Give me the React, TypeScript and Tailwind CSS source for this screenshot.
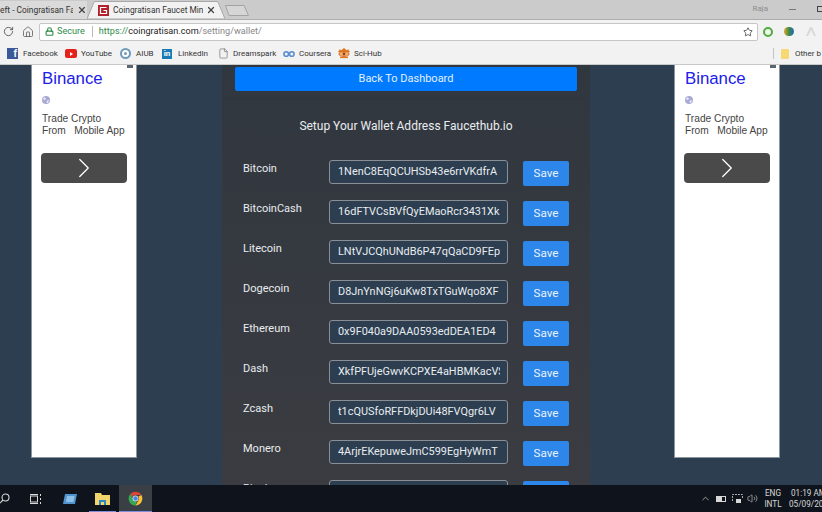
import { ChevronRight, ChevronUp, File, Home, RotateCw, Star, Volume2, X, Lock } from 'lucide-react';

const font = "font-['Roboto',sans-serif]";

type Wallet = { name: string; value: string };

const wallets: Wallet[] = [
  { name: 'Bitcoin', value: '1NenC8EqQCUHSb43e6rrVKdfrA' },
  { name: 'BitcoinCash', value: '16dFTVCsBVfQyEMaoRcr3431Xk' },
  { name: 'Litecoin', value: 'LNtVJCQhUNdB6P47qQaCD9FEp' },
  { name: 'Dogecoin', value: 'D8JnYnNGj6uKw8TxTGuWqo8XF' },
  { name: 'Ethereum', value: '0x9F040a9DAA0593edDEA1ED4' },
  { name: 'Dash', value: 'XkfPFUjeGwvKCPXE4aHBMKacVS' },
  { name: 'Zcash', value: 't1cQUSfoRFFDkjDUi48FVQgr6LV' },
  { name: 'Monero', value: '4ArjrEKepuweJmC599EgHyWmT' },
  { name: 'Ripple', value: 'rLHzPsX6oXkzU2qL12kHCH8G8c' },
];

const ChromeLogo = ({ size }: { size: number }) => (
  <svg width={size} height={size} viewBox="0 0 24 24">
    <path d="M12 1a11 11 0 0 1 9.500 5.500H12a5.500 5.500 0 0 0-5 3.200L3.600 4.900A11 11 0 0 1 12 1z" fill="#dc4437" />
    <path d="M21.500 6.500A11 11 0 0 1 12 23l4.800-8.200A5.500 5.500 0 0 0 16.500 8.800z" fill="#fbc02d" />
    <path d="M12 23A11 11 0 0 1 3.600 4.900L7.900 12a5 5 0 0 0 6.300 5z" fill="#34a853" />
    <circle cx="12" cy="12" r="4.200" fill="#4a7fe0" stroke="#fff" strokeWidth="1.200" />
  </svg>
);

const bookmarks = [
  {
    label: 'Facebook',
    width: 'w-[58px] gap-[5px]',
    icon: (
      <span className="flex h-[11px] w-[11px] items-end justify-end bg-[#3b5998] pr-[1px] text-[10px] font-bold leading-none text-white">f</span>
    ),
  },
  {
    label: 'YouTube',
    width: 'w-[55px] gap-[4px]',
    icon: (
      <span className="flex h-[9px] w-[12px] items-center justify-center rounded-[2px] bg-[#e5211b]">
        <span className="h-0 w-0 border-y-[2px] border-l-[3px] border-y-transparent border-l-white" />
      </span>
    ),
  },
  {
    label: 'AIUB',
    width: 'w-[42px] gap-[5px]',
    icon: (
      <span className="flex h-[11px] w-[11px] items-center justify-center rounded-full border-2 border-[#6d9abb] bg-white">
        <span className="h-[3px] w-[3px] rounded-full bg-[#6d9abb]" />
      </span>
    ),
  },
  {
    label: 'LinkedIn',
    width: 'w-[56px] gap-[6px]',
    icon: (
      <span className="flex h-[10px] w-[10px] items-center justify-center bg-[#1a7cb5] text-[8px] font-bold leading-none text-white">in</span>
    ),
  },
  { label: 'Dreamspark', width: 'w-[65px] gap-[4px]', icon: <File size={11} strokeWidth={1.2} className="text-[#555]" /> },
  {
    label: 'Coursera',
    width: 'w-[55px] gap-[4px]',
    icon: (
      <svg width="12" height="8" viewBox="0 0 12 8" fill="none" stroke="#5a8fd0" strokeWidth="1.600">
        <circle cx="3.200" cy="4" r="2.300" />
        <circle cx="8.800" cy="4" r="2.300" />
      </svg>
    ),
  },
  {
    label: 'Sci-Hub',
    width: 'w-[50px] gap-[4px]',
    icon: (
      <svg width="12" height="11" viewBox="0 0 12 11">
        <path d="M0 4L2 1l1 1.500L6 0l3 2.500L10 1l2 3-2 .5H2z" fill="#e2761b" />
        <ellipse cx="6" cy="6" rx="5" ry="2.400" fill="#f2b56a" stroke="#c9541a" strokeWidth="0.800" />
        <circle cx="6" cy="6" r="1.400" fill="#a83a12" />
        <path d="M2 9.500h8" stroke="#e2761b" strokeWidth="1.200" />
      </svg>
    ),
  },
];

const AdPanel = () => (
  <div className="h-[393px] w-[106px] shrink-0 self-start border border-t-0 border-[#8d959c] bg-white pl-[10px] font-['Liberation_Sans',sans-serif]">
    <div className="relative">
      <div className="absolute right-[3px] top-0 h-[3px] w-[6px] bg-[#5b6670]" />
    </div>
    <div className="text-[16.800px] leading-[27px] text-[#2020e8]">Binance</div>
    <svg className="mt-[4px]" width="8" height="8" viewBox="0 0 8 8">
      <circle cx="4" cy="4" r="4" fill="#a9a9d6" />
      <path d="M2 1l2 1.500-1 1.500L1 3.500zM5 4.500l2-.5-1 3-1.500-.5z" fill="#e8e8f4" />
    </svg>
    <div className="mt-[9px] text-[10.200px] leading-[12px] text-[#444]">
      <div>Trade Crypto</div>
      <div className="whitespace-pre">From   Mobile App</div>
    </div>
    <div className="ml-[-1px] mt-[16px] flex h-[30px] w-[86px] items-center justify-center rounded-[4px] bg-[#4a4a4a]">
      <ChevronRight size={34} strokeWidth={0.9} className="text-white" />
    </div>
  </div>
);

const WalletRow = ({ wallet }: { wallet: Wallet }) => (
  <div className="flex h-[40px] shrink-0 items-start">
    <div className="w-[86px] text-[11px] leading-[16px] text-[#e9ecef]">{wallet.name}</div>
    <div className="mt-[-1px] h-[24px] w-[179px] shrink-0 rounded-[3px] border border-[#8a8f96] bg-[#2c3e50] pl-[8px] text-[10.900px] leading-[22px] text-[#e9ecef]">
      <div className="w-[162px] overflow-hidden whitespace-nowrap">{wallet.value}</div>
    </div>
    <button className="ml-[15px] h-[25px] w-[46px] rounded-[2px] bg-[#2d86ea] text-[11.700px] text-[#e9f2ff]">Save</button>
  </div>
);

export default function App() {
  return (
    <div className={`flex h-[512px] w-[822px] flex-col overflow-hidden bg-[#2c3e50] ${font}`}>
      {/* tab strip */}
      <div className="flex h-[19px] shrink-0 items-end overflow-hidden bg-[#cbcbcb] text-[8.400px] text-[#333]">
        <div className="flex h-[18px] w-[87px] shrink-0 items-center whitespace-nowrap bg-[#dadada]">
          <span className="w-[74px] overflow-hidden">eft - Coingratisan Faucet</span>
          <X size={10} strokeWidth={3} className="ml-[4px] text-[#444]" />
        </div>
        <div className="relative flex h-[18px] w-[138px] shrink-0 items-center pl-[11px]">
          <svg className="absolute inset-0" width="138" height="18" viewBox="0 0 138 18">
            <path d="M0 18 L7 1 Q7.500 .5 9 .5 H129 Q130.500 .5 131 1 L138 18 Z" fill="#f2f2f2" stroke="#a8a8a8" />
          </svg>
          <svg className="relative shrink-0" width="11" height="11" viewBox="0 0 11 11">
            <rect width="11" height="11" fill="#b3222c" />
            <path d="M8.500 2.500H2.500V8.500H8.500V5.500H5.500" fill="none" stroke="#fff" strokeWidth="1.200" />
          </svg>
          <span className="relative ml-[4px] w-[90px] overflow-hidden whitespace-nowrap">Coingratisan Faucet Mining</span>
          <X size={10} strokeWidth={3} className="relative ml-[3px] text-[#444]" />
        </div>
        <svg className="mb-[3px] shrink-0" width="24" height="11" viewBox="0 0 24 11" fill="#d6d6d6" stroke="#a3a3a3">
          <path d="M.5 .5H19L23.500 10.500H4z" />
        </svg>
        <div className="flex-1" />
        <span className="mb-[4px] text-[8px] text-[#8d8d8d]">Raja</span>
        <div className="mb-[9px] ml-[21px] h-[1px] w-[7px] bg-[#777]" />
        <div className="mb-[7px] ml-[21px] mr-[-3px] h-[6px] w-[8px] border border-[#444]" />
      </div>

      {/* toolbar */}
      <div className="flex h-[24px] shrink-0 items-center border-t border-[#adadad] bg-[#f2f2f2]">
        <RotateCw size={11} strokeWidth={2} className="ml-[3px] text-[#5a5a5a]" />
        <Home size={12} strokeWidth={1.600} className="ml-[8px] text-[#5a5a5a]" />
        <div className="ml-[5px] flex h-[18px] w-[719px] items-center rounded-[2px] border border-[#c6c6c6] bg-white pl-[5px] text-[9.100px]">
          <Lock size={9} strokeWidth={3} className="text-[#2e8b47]" />
          <span className="ml-[3px] text-[#2e8b47]">Secure</span>
          <span className="ml-[7px] h-[11px] w-[1px] bg-[#bbb]" />
          <span className="ml-[6px] text-[#2e8b47]">https://</span>
          <span className="text-[#222]">coingratisan.com</span>
          <span className="text-[#888]">/setting/wallet/</span>
          <Star size={10} strokeWidth={2} className="ml-auto mr-[4px] text-[#444]" />
        </div>
        <div className="ml-[5px] h-[10px] w-[10px] rounded-full border-2 border-[#4fae3c]" />
        <div className="ml-[11px] h-[9px] w-[10px] rounded-full bg-gradient-to-r from-[#d9a22a] via-[#3a8a3e] to-[#2a63b8]" />
        <svg className="ml-[12px]" width="10" height="9" viewBox="0 0 10 9" fill="#d8d8d8">
          <path d="M0 9L4 0h2l4 9H8L5 3 2 9z" />
        </svg>
      </div>

      {/* bookmarks */}
      <div className="flex h-[22px] shrink-0 items-center border-b border-[#c9c9c9] bg-[#f2f2f2] pl-[7px] text-[8px] text-[#333]">
        {bookmarks.map((b) => (
          <div key={b.label} className={`flex shrink-0 items-center ${b.width}`}>
            {b.icon}
            <span>{b.label}</span>
          </div>
        ))}
        <div className="ml-auto h-[11px] w-[1px] bg-[#c4c4c4]" />
        <div className="ml-[7px] h-[10px] w-[8px] rounded-[1px] bg-[#f8d775]" />
        <span className="ml-[6px] w-[27px] shrink-0 whitespace-nowrap">Other b</span>
      </div>

      {/* page */}
      <div className="flex min-h-0 flex-1 overflow-hidden pl-[31px]">
        <AdPanel />
        <div className="ml-[85px] flex h-full w-[368px] shrink-0 flex-col overflow-hidden bg-gradient-to-b from-[#31373f] to-[#3a3c41]">
          <div className="flex h-[34px] shrink-0 items-start border-b border-[#30343b] pl-[13px] pt-[2px]">
            <button className="h-[24px] w-[342px] rounded-[2px] bg-[#007bff] text-[11px] text-[#e3f0ff]">Back To Dashboard</button>
          </div>
          <div className="flex h-[52px] shrink-0 items-center justify-center pt-[2px] text-[12px] text-[#e9ecef]">
            Setup Your Wallet Address Faucethub.io
          </div>
          <div className="flex flex-col pl-[21px] pt-[10px]">
            {wallets.map((w) => (
              <WalletRow key={w.name} wallet={w} />
            ))}
          </div>
        </div>
        <div className="ml-[84px]">
          <AdPanel />
        </div>
      </div>

      {/* taskbar */}
      <div className="flex h-[27px] shrink-0 items-center bg-[#0f141c] text-[#d8d8d8]">
        <svg className="ml-[-1px] shrink-0" width="11" height="11" viewBox="0 0 11 11" fill="none" stroke="#d8d8d8" strokeWidth="1.100">
          <circle cx="6.500" cy="4.500" r="3.500" />
          <path d="M4 7L.5 10.500" />
        </svg>
        <svg className="ml-[20px] shrink-0" width="12" height="10" viewBox="0 0 12 10" fill="none" stroke="#d8d8d8">
          <rect x=".5" y="2" width="7" height="6" />
          <path d="M0 .5h8M0 9.500h8M10.500 0v2M10.500 4v2M10.500 8v2" />
        </svg>
        <svg className="ml-[21px] shrink-0" width="14" height="10" viewBox="0 0 14 10">
          <path d="M2 0H14L12 10H0z" fill="#4f94cf" />
          <path d="M4 2H11.500L10.500 8H3z" fill="#8fc0e8" />
        </svg>
        <div className="relative ml-[12px] flex h-full w-[27px] shrink-0 items-center justify-center">
          <svg width="15" height="12" viewBox="0 0 15 12">
            <path d="M0 0H6L7 2H15V12H0z" fill="#f3d36b" />
            <path d="M4 7H11V12H9V9H6V12H4z" fill="#2a87c8" />
          </svg>
          <div className="absolute bottom-0 left-0 h-[1px] w-full bg-[#7f8fe0]" />
        </div>
        <div className="relative ml-[3px] flex h-full w-[33px] shrink-0 items-center justify-center bg-[#3a3f46]">
          <ChromeLogo size={15} />
          <div className="absolute bottom-0 left-0 h-[1px] w-full bg-[#7f8fe0]" />
        </div>
        <ChevronUp size={11} strokeWidth={1.500} className="ml-auto" />
        <div className="ml-[5px] flex h-[6px] w-[10px] items-center border border-[#d8d8d8]">
          <div className="h-full w-[5px] bg-[#d8d8d8]" />
        </div>
        <svg className="ml-[6px] shrink-0" width="11" height="10" viewBox="0 0 11 10" fill="none" stroke="#aaa">
          <path d="M.5 7V.5H10.500V5" strokeDasharray="2 1" />
          <rect x="4" y="5" width="5" height="4" fill="#d8d8d8" stroke="none" />
        </svg>
        <Volume2 size={11} strokeWidth={1.300} className="ml-[4px]" />
        <div className="ml-[3px] w-[24px] text-center text-[8.200px] leading-[11px]">
          <div>ENG</div>
          <div>INTL</div>
        </div>
        <div className="ml-[4px] mr-[-4px] w-[37px] whitespace-nowrap text-[8.200px] leading-[11px]">
          <div className="pl-[2px]">01:19 AM</div>
          <div>05/09/2018</div>
        </div>
      </div>
    </div>
  );
}
